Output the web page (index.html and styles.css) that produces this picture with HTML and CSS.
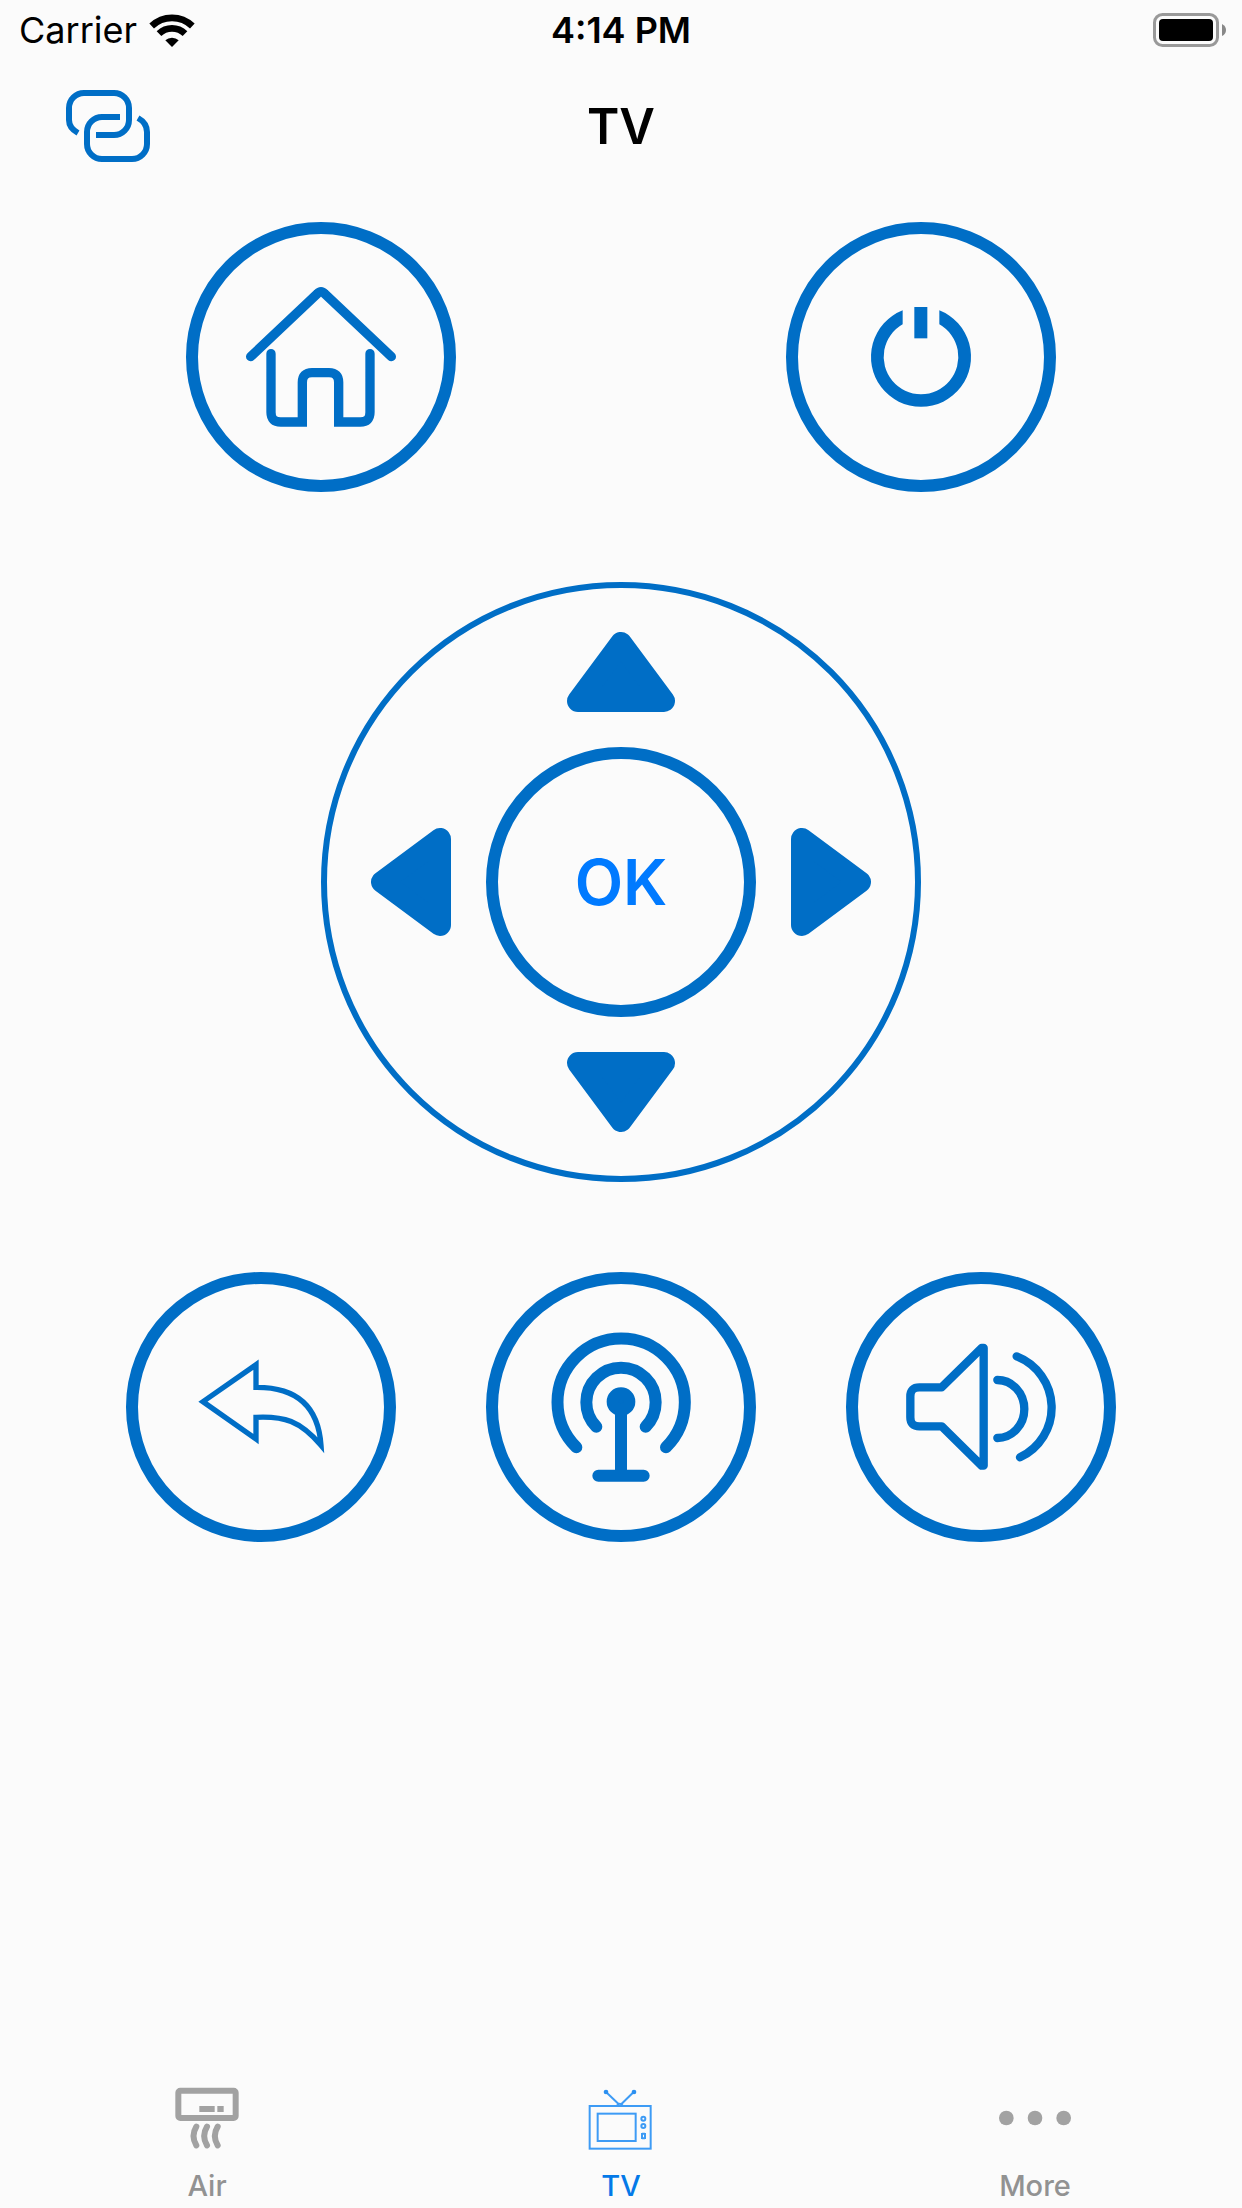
FILE: index.html
```html
<!DOCTYPE html>
<html lang="en">
<head>
    <meta charset="UTF-8">
    <meta name="viewport" content="width=device-width, initial-scale=1.0">
    <title>TV</title>
    <link rel="stylesheet" href="styles.css">
</head>
<body>
    <div class="status-bar">
        <div class="carrier">
            <span>Carrier</span>
            <svg class="wifi" viewBox="447 39 138 99" aria-hidden="true">
                <path class="wifi-arc" d="M455 75 A88 88 0 0 1 577 75"/>
                <path class="wifi-arc" d="M477 98 A56 56 0 0 1 555 98"/>
                <path d="M496 118 A29 29 0 0 1 536 118 L516 138 Z"/>
            </svg>
        </div>
        <div class="clock">4:14 PM</div>
        <svg class="battery" viewBox="0 0 74 34" aria-hidden="true">
            <rect class="battery-case" x="1.5" y="1.5" width="63" height="31" rx="8"/>
            <rect x="6" y="6" width="54" height="22" rx="4"/>
            <path class="battery-cap" d="M69 11 Q73 13 73 17 Q73 21 69 23 Z"/>
        </svg>
    </div>

    <header class="nav-bar">
        <button type="button" class="link-button" aria-label="Connect">
            <svg class="link-icon" viewBox="0 0 84 72">
                <path d="M12 43 Q3 38 3 30 V18 A15 15 0 0 1 18 3 H48 A15 15 0 0 1 63 18 V30 A15 15 0 0 1 48 45 H30"/>
                <path d="M54 27 H36 A15 15 0 0 0 21 42 V54 A15 15 0 0 0 36 69 H66 A15 15 0 0 0 81 54 V42 Q81 33 72 28"/>
            </svg>
        </button>
        <h1>TV</h1>
    </header>

    <main class="remote">
        <div class="row row-top">
            <button type="button" class="round" aria-label="Home">
                <svg class="icon home" viewBox="54 57 738 738">
                    <path d="M212 425 L412 236 Q423 224 434 236 L634 425"/>
                    <path d="M273 416 V592 Q273 621 302 621 H367 V502 Q367 473 396 473 H447 Q476 473 476 502 V621 H541 Q570 621 570 592 V416"/>
                </svg>
            </button>
            <button type="button" class="round" aria-label="Power">
                <svg class="icon solid" viewBox="54 57 738 738">
                    <path d="M368 286 A150 150 0 1 0 478 286 V328 A112 112 0 1 1 368 328 Z"/>
                    <rect x="403" y="276" width="39" height="94"/>
                </svg>
            </button>
        </div>

        <div class="pad">
            <button type="button" class="arrow up" aria-label="Up">
                <svg width="110" height="81"><path d="M55 12 L98 70 H12 Z"/></svg>
            </button>
            <button type="button" class="arrow left" aria-label="Left">
                <svg width="81" height="110"><path d="M12 55 L70 12 V98 Z"/></svg>
            </button>
            <button type="button" class="round ok">OK</button>
            <button type="button" class="arrow right" aria-label="Right">
                <svg width="81" height="110"><path d="M69 55 L11 12 V98 Z"/></svg>
            </button>
            <button type="button" class="arrow down" aria-label="Down">
                <svg width="110" height="81"><path d="M55 69 L98 11 H12 Z"/></svg>
            </button>
        </div>

        <div class="row row-bottom">
            <button type="button" class="round" aria-label="Back">
                <svg class="icon back" viewBox="54 57 738 738">
                    <path d="M408 299 L249 410 L408 522 V457 C492 453 540 467 603 541 C595 425 530 366 408 367 Z"/>
                </svg>
            </button>
            <button type="button" class="round" aria-label="Signal">
                <svg class="icon signal" viewBox="54 57 738 738">
                    <path d="M289 547 A191 191 0 1 1 558 547"/>
                    <path d="M349 485 A104 104 0 1 1 497 485"/>
                    <path d="M423 410 V632 M355 632 H491"/>
                    <circle cx="423" cy="410" r="25"/>
                </svg>
            </button>
            <button type="button" class="round" aria-label="Volume">
                <svg class="icon volume" viewBox="54 57 738 738">
                    <path d="M305 367 H238 Q211 367 211 394 V457 Q211 484 238 484 H305 L425 602 H431 V249 H425 Z"/>
                    <path d="M472 345 A81 87 0 0 1 472 519"/>
                    <path d="M530 274 A165 165 0 0 1 540 577"/>
                </svg>
            </button>
        </div>
    </main>

    <nav class="tab-bar">
        <a href="#air" class="tab">
            <svg class="tab-icon" viewBox="54 48 234 198">
                <rect class="air-line" x="85" y="62" width="172" height="82" rx="6"/>
                <rect x="148" y="108" width="46" height="18"/>
                <rect x="202" y="108" width="19" height="18"/>
                <path class="air-line" d="M139 170 Q122 198 139 226 M171 170 Q154 198 171 226 M203 170 Q186 198 203 226"/>
            </svg>
            <span>Air</span>
        </a>
        <a href="#tv" class="tab active">
            <svg class="tab-icon" viewBox="66 48 234 198">
                <rect class="tv-line" x="89" y="108" width="183" height="128"/>
                <rect class="tv-line" x="113" y="131" width="114" height="82"/>
                <path class="tv-line" d="M138 66 L175 101 M221 66 L185 101 M171 107 Q179 96 188 107"/>
                <circle cx="138" cy="66" r="7"/>
                <circle cx="222" cy="66" r="7"/>
                <circle class="tv-line" cx="250" cy="146" r="6"/>
                <circle class="tv-line" cx="250" cy="168" r="6"/>
                <path class="tv-line" d="M246 189 V207 M255 189 V207 M246 191 H255 M246 205 H255"/>
            </svg>
            <span>TV</span>
        </a>
        <a href="#more" class="tab">
            <svg class="tab-icon" viewBox="78 48 234 198">
                <circle cx="109" cy="144" r="22"/>
                <circle cx="195" cy="144" r="22"/>
                <circle cx="281" cy="144" r="22"/>
            </svg>
            <span>More</span>
        </a>
    </nav>
</body>
</html>
```

FILE: styles.css
```css
* {
    box-sizing: border-box;
}

body {
    display: flex;
    flex-direction: column;
    min-height: 100vh;
    margin: 0;
    background: #fbfbfb;
    color: #000;
    font-family: Inter, "Liberation Sans", sans-serif;
}

button {
    padding: 0;
    border: none;
    background: none;
    font-family: inherit;
    cursor: pointer;
}

svg {
    display: block;
}

/* status bar */
.status-bar {
    display: grid;
    grid-template-columns: 1fr auto 1fr;
    align-items: center;
    height: 60px;
    padding: 0 15px;
    font-size: 36px;
}

.carrier {
    display: flex;
    align-items: center;
    gap: 12px;
    padding-left: 4px;
}

.wifi {
    width: 46px;
    height: 33px;
}

.wifi-arc {
    fill: none;
    stroke: #000;
    stroke-width: 20;
}

.clock {
    font-weight: 600;
}

.battery {
    justify-self: end;
    width: 74px;
    height: 34px;
}

.battery-case {
    fill: none;
    stroke: #999;
    stroke-width: 3;
}

.battery-cap {
    fill: #888;
}

/* title */
.nav-bar {
    display: grid;
    grid-template-columns: 1fr auto 1fr;
    align-items: center;
    height: 132px;
    padding: 0 66px;
}

.link-button {
    justify-self: start;
}

.link-icon {
    width: 84px;
    height: 72px;
    fill: none;
    stroke: #006ec6;
    stroke-width: 6;
}

h1 {
    margin: 0;
    font-size: 49px;
    font-weight: 600;
}

/* remote */
.remote {
    flex: 1;
    display: flex;
    flex-direction: column;
    align-items: center;
    gap: 90px;
    padding: 30px 0;
}

.row {
    display: flex;
    justify-content: center;
}

.row-top {
    gap: 330px;
}

.row-bottom {
    gap: 90px;
}

.round {
    width: 270px;
    height: 270px;
    border: 12px solid #006ec6;
    border-radius: 50%;
}

.icon {
    width: 100%;
    height: 100%;
    fill: none;
    stroke: #006ec6;
    stroke-linecap: round;
}

.solid {
    fill: #006ec6;
    stroke: none;
}

.home {
    stroke-width: 28;
}

.back {
    stroke-width: 16;
    stroke-miterlimit: 10;
}

.signal {
    stroke-width: 36;
}

.volume {
    stroke-width: 25;
    stroke-linejoin: round;
}

.pad {
    display: grid;
    grid-template-columns: 81px 270px 81px;
    grid-template-rows: 81px 270px 81px;
    grid-template-areas:
        ". up ."
        "left ok right"
        ". down .";
    gap: 35px;
    place-content: center;
    place-items: center;
    width: 600px;
    height: 600px;
    border: 6px solid #006ec6;
    border-radius: 50%;
}

.up {
    grid-area: up;
}

.left {
    grid-area: left;
}

.right {
    grid-area: right;
}

.down {
    grid-area: down;
}

.ok {
    grid-area: ok;
    color: #007aff;
    font-size: 63px;
    font-weight: 600;
}

.arrow path {
    fill: #006ec6;
    stroke: #006ec6;
    stroke-width: 22;
    stroke-linejoin: round;
}

/* tabs */
.tab-bar {
    display: flex;
    height: 147px;
    padding: 25px 0 4px;
}

.tab {
    flex: 1;
    display: flex;
    flex-direction: column;
    align-items: center;
    gap: 16px;
    color: #929292;
    font-size: 29px;
    font-weight: 500;
    line-height: 36px;
    text-decoration: none;
}

.tab-icon {
    width: 78px;
    height: 66px;
    fill: #a2a2a2;
}

.active {
    color: #0479e8;
}

.active .tab-icon {
    fill: #2b8ff0;
}

.air-line {
    fill: none;
    stroke: #a2a2a2;
    stroke-width: 18;
    stroke-linecap: round;
}

.tv-line {
    fill: none;
    stroke: #3d9bf5;
    stroke-width: 6;
}
```
